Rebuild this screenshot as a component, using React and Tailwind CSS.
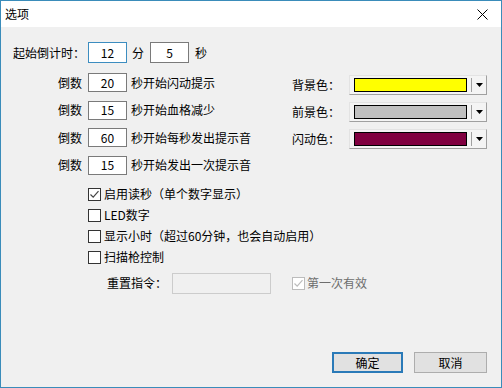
import React from "react";

const countdownRows = [
  { value: "20", text: "秒开始闪动提示" },
  { value: "15", text: "秒开始血格减少" },
  { value: "60", text: "秒开始每秒发出提示音" },
  { value: "15", text: "秒开始发出一次提示音" },
];

const colorRows = [
  { label: "背景色：", color: "bg-[#ffff00]" },
  { label: "前景色：", color: "bg-[#c0c0c0]" },
  { label: "闪动色：", color: "bg-[#800040]" },
];

const options = [
  { text: "启用读秒（单个数字显示）", checked: true },
  { text: "LED数字", checked: false },
  { text: "显示小时（超过60分钟，也会自动启用）", checked: false },
  { text: "扫描枪控制", checked: false },
];

function CheckBox({ checked, disabled }) {
  return (
    <span
      className={`flex h-[13px] w-[13px] shrink-0 items-center justify-center border bg-white ${
        disabled ? "border-[#bcbcbc]" : "border-[#333333]"
      }`}
    >
      {checked && (
        <svg width="11" height="11" viewBox="0 0 11 11">
          <path
            d="M1.5 5.5 L4.2 8.2 L9.5 2.2"
            fill="none"
            stroke={disabled ? "#bcbcbc" : "#444444"}
            strokeWidth="1.2"
          />
        </svg>
      )}
    </span>
  );
}

function NumBox({ value, focused }) {
  return (
    <div
      className={`flex h-[19px] w-[39px] shrink-0 items-center justify-center border bg-white ${
        focused ? "border-[#3c8dc0]" : "border-[#7a7a7a]"
      }`}
    >
      {value}
    </div>
  );
}

function ColorCombo({ color }) {
  return (
    <div className="flex h-[20px] w-[138px] items-center border border-t-[#e3e3e3] border-l-[#e3e3e3] border-r-[#a0a0a0] border-b-[#a0a0a0] bg-[#f4f4f4]">
      <div className={`ml-[4px] h-[14px] w-[113px] border border-black ${color}`} />
      <div className="ml-[4px] h-[14px] w-px bg-[#a0a0a0]" />
      <div className="flex flex-1 items-center justify-center">
        <svg width="7" height="4" viewBox="0 0 7 4">
          <path d="M0 0 H7 L3.5 4 Z" fill="#000" />
        </svg>
      </div>
    </div>
  );
}

export default function App() {
  return (
    <div
      className="flex h-[388px] w-[502px] flex-col border border-[#3a8cba] bg-[#f0f0f0] text-[12px] leading-none text-black"
      style={{ fontFamily: '"Noto Sans CJK SC", "Noto Sans", sans-serif' }}
    >
      {/* title bar */}
      <div className="flex h-[26px] shrink-0 items-center justify-between bg-white pl-[4px] pr-[13px]">
        <span>选项</span>
        <svg width="11" height="11" viewBox="0 0 11 11">
          <path d="M0.5 0.5 L10.5 10.5 M10.5 0.5 L0.5 10.5" stroke="#000" strokeWidth="1" />
        </svg>
      </div>

      <div className="flex flex-1 flex-col pl-[12px] pr-[14px] pb-[14px]">
        <div className="flex">
          {/* left column */}
          <div className="flex w-[279px] flex-col">
            <div className="mt-[15px] flex h-[21px] items-center">
              <span className="w-[75px]">起始倒计时：</span>
              <div className="flex h-[21px] w-[39px] items-center justify-center border border-[#3c8dc0] bg-white">12</div>
              <span className="ml-[5px]">分</span>
              <div className="ml-[6px] flex h-[21px] w-[39px] items-center justify-center border border-[#7a7a7a] bg-white">5</div>
              <span className="ml-[6px]">秒</span>
            </div>
            <div className="mt-[10px] flex flex-col gap-[8.5px]">
              {countdownRows.map((r, i) => (
                <div key={i} className="flex h-[19px] items-center">
                  <span className="w-[75px] pr-[6px] text-right">倒数</span>
                  <NumBox value={r.value} />
                  <span className="ml-[4px] whitespace-nowrap">{r.text}</span>
                </div>
              ))}
            </div>
          </div>

          {/* right column */}
          <div className="mt-[48px] flex flex-col gap-[7px]">
            {colorRows.map((r, i) => (
              <div key={i} className="flex h-[20px] items-center">
                <span className="w-[57px]">{r.label}</span>
                <ColorCombo color={r.color} />
              </div>
            ))}
          </div>
        </div>

        {/* options */}
        <div className="ml-[75px] mt-[9px] flex flex-col">
          {options.map((o, i) => (
            <div key={i} className="flex h-[21px] items-center gap-[3px]">
              <CheckBox checked={o.checked} />
              <span className="whitespace-nowrap">{o.text}</span>
            </div>
          ))}
        </div>

        <div className="ml-[94px] mt-[5px] flex h-[21px] items-center">
          <span className="w-[65px]">重置指令：</span>
          <div className="h-[21px] w-[99px] border border-[#cccccc] bg-[#f0f0f0]" />
          <div className="ml-[21px] flex items-center gap-[2px] text-[#6d6d6d]">
            <CheckBox checked disabled />
            <span>第一次有效</span>
          </div>
        </div>

        <div className="mt-auto flex justify-end gap-[11px]">
          <button className="h-[21px] w-[71px] border-2 border-[#2a7ab8] bg-[#e1e1e1]">确定</button>
          <button className="h-[21px] w-[73px] border border-[#adadad] bg-[#e1e1e1]">取消</button>
        </div>
      </div>
    </div>
  );
}
